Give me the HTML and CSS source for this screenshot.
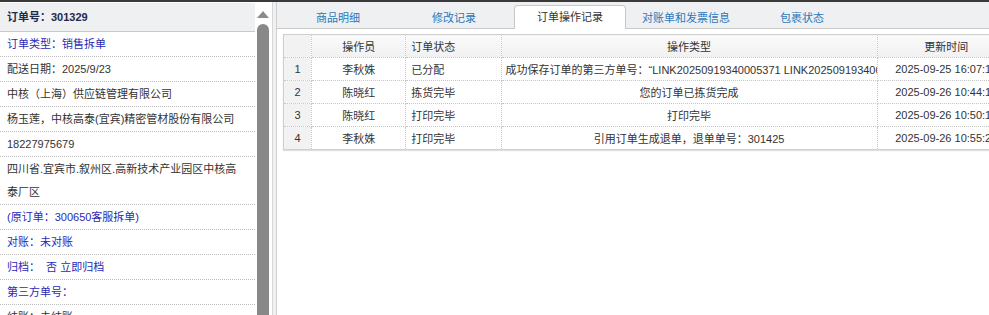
FILE: index.html
```html
<!DOCTYPE html>
<html lang="zh-CN">
<head>
  <meta charset="UTF-8">
  <title>订单详情</title>
  <link rel="stylesheet" href="styles.css">
</head>
<body>

  <div class="page">
    <aside class="side">
      <div class="side-list">
        <div class="side-head">订单号：301329</div>
        <div class="side-row blue">订单类型：销售拆单</div>
        <div class="side-row">配送日期：2025/9/23</div>
        <div class="side-row">中核（上海）供应链管理有限公司</div>
        <div class="side-row">杨玉莲，中核高泰(宜宾)精密管材股份有限公司</div>
        <div class="side-row">18227975679</div>
        <div class="side-row">四川省.宜宾市.叙州区.高新技术产业园区中核高泰厂区</div>
        <div class="side-row blue">(原订单：300650客服拆单)</div>
        <div class="side-row blue">对账：未对账</div>
        <div class="side-row blue">归档：&nbsp; 否 立即归档</div>
        <div class="side-row blue">第三方单号：</div>
        <div class="side-row">结账：未结账</div>
      </div>
      <div class="scroll">
        <div class="scroll-up"></div>
        <div class="scroll-thumb"></div>
      </div>
    </aside>

    <div class="split"></div>

    <main class="main">
      <div class="tabs">
        <div class="tab">商品明细</div>
        <div class="tab">修改记录</div>
        <div class="tab active">订单操作记录</div>
        <div class="tab">对账单和发票信息</div>
        <div class="tab">包裹状态</div>
      </div>

      <div class="tab-body">
        <table class="grid">
          <colgroup>
            <col class="c-num">
            <col class="c-user">
            <col class="c-state">
            <col class="c-type">
            <col class="c-time">
          </colgroup>
          <thead>
            <tr>
              <th class="num"></th>
              <th>操作员</th>
              <th class="left">订单状态</th>
              <th>操作类型</th>
              <th>更新时间</th>
            </tr>
          </thead>
          <tbody>
            <tr>
              <td class="num">1</td>
              <td>李秋姝</td>
              <td class="left">已分配</td>
              <td class="type">成功保存订单的第三方单号：“LINK20250919340005371 LINK20250919340005372”</td>
              <td>2025-09-25 16:07:13</td>
            </tr>
            <tr>
              <td class="num">2</td>
              <td>陈晓红</td>
              <td class="left">拣货完毕</td>
              <td class="type">您的订单已拣货完成</td>
              <td>2025-09-26 10:44:12</td>
            </tr>
            <tr>
              <td class="num">3</td>
              <td>陈晓红</td>
              <td class="left">打印完毕</td>
              <td class="type">打印完毕</td>
              <td>2025-09-26 10:50:16</td>
            </tr>
            <tr>
              <td class="num">4</td>
              <td>李秋姝</td>
              <td class="left">打印完毕</td>
              <td class="type">引用订单生成退单，退单单号：301425</td>
              <td>2025-09-26 10:55:21</td>
            </tr>
          </tbody>
        </table>
      </div>
    </main>
  </div>

</body>
</html>
```

FILE: styles.css
```css
body {
  font-family: "Liberation Sans", "Noto Sans CJK SC", sans-serif;
  font-size: 11px;
  color: #333;
  background: #fff;
  margin: 0;
  overflow: hidden;
  border-top: 2px solid #3a3a3a;
}

.page {
  display: flex;
  height: 313px;
}

/* left info panel */
.side {
  display: flex;
  width: 272px;
  flex-shrink: 0;
  overflow: hidden;
}

.side-list {
  width: 255px;
  flex-shrink: 0;
}

.side-head {
  background: #eff0f2;
  border-top: 1px solid #fff;
  border-bottom: 1px solid #c9c9c9;
  height: 28px;
  line-height: 28px;
  padding-left: 7px;
  font-weight: bold;
  color: #1e2a4a;
}

.side-row {
  padding: 1px 10px 0 7px;
  line-height: 23px;
  border-bottom: 1px dotted #bdbdbd;
}

.blue {
  color: #2a2ab4;
}

.scroll {
  width: 17px;
  padding-left: 2px;
  box-sizing: border-box;
}

.scroll-up {
  width: 0;
  height: 0;
  margin: 9px 0 0 0;
  border-left: 6px solid transparent;
  border-right: 6px solid transparent;
  border-bottom: 7px solid #8c8c8c;
}

.scroll-thumb {
  width: 12px;
  height: 400px;
  margin-top: 6px;
  background: #888;
  border-radius: 6px 6px 0 0;
}

.split {
  width: 3px;
  flex-shrink: 0;
  background: #f0f0f0;
  border-left: 1px solid #d8d8d8;
  border-right: 1px solid #d0d0d0;
}

/* right tabs */
.main {
  flex: 1;
  min-width: 0;
  overflow: hidden;
}

.tabs {
  display: flex;
  align-items: flex-end;
  gap: 4px;
  height: 26px;
  padding-left: 5px;
  background: #eef0f2;
  border-bottom: 1px solid #c8c8c8;
}

.tab {
  box-sizing: border-box;
  width: 112px;
  flex-shrink: 0;
  height: 22px;
  line-height: 22px;
  text-align: center;
  color: #2b78bb;
  border: 1px solid transparent;
  border-bottom: none;
}

.tab.active {
  background: #fff;
  color: #333;
  border-color: #c8c8c8;
  border-radius: 4px 4px 0 0;
  height: 24px;
  margin-bottom: -1px;
}

.tab-body {
  padding: 5px 0 0 6px;
}

.grid {
  border-collapse: collapse;
  table-layout: fixed;
  width: 733px;
  border: 1px solid #cfcfcf;
  box-shadow: 0 1px 1px rgba(0,0,0,0.12);
}

.c-num { width: 28px; }
.c-user { width: 94px; }
.c-state { width: 95px; }
.c-type { width: 375px; }
.c-time { width: 138px; }

.grid th, .grid td {
  height: 22px;
  padding: 0;
  border: 1px dotted #c6c6c6;
  text-align: center;
  font-weight: normal;
  white-space: nowrap;
  overflow: hidden;
}

.grid th {
  background: linear-gradient(#fafafa, #f1f1f1);
}

.grid .num {
  background: #f2f2f2;
}

.grid .left {
  text-align: left;
  padding-left: 5px;
}

.grid .type {
  padding: 0 4px;
}
```
